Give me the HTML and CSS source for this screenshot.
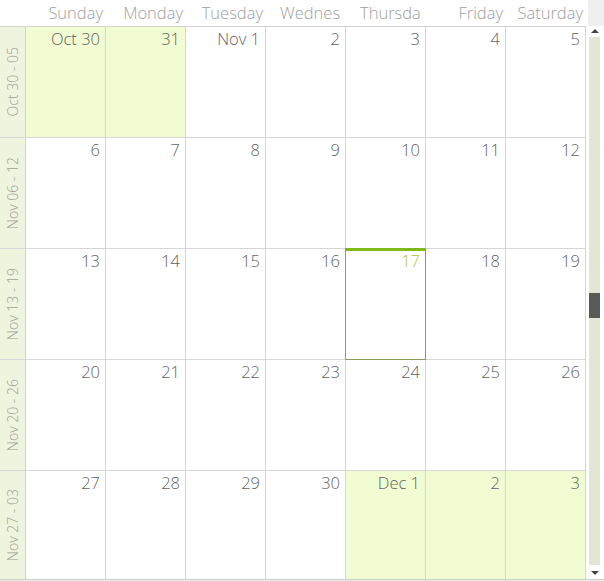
FILE: index.html
```html
<!DOCTYPE html>
<html>
<head>
<meta charset="utf-8">
<link rel="stylesheet" href="styles.css">
</head>
<body>
<div class="cal">
  <div class="main">
    <div class="head">
      <div class="corner"></div>
      <div class="hcell">Sunday</div>
      <div class="hcell">Monday</div>
      <div class="hcell">Tuesday</div>
      <div class="hcell lft">Wednes</div>
      <div class="hcell lft">Thursda</div>
      <div class="hcell">Friday</div>
      <div class="hcell">Saturday</div>
    </div>
    <div class="week">
      <div class="wlabel"><span>Oct 30 - 05</span></div>
      <div class="day other">Oct 30</div>
      <div class="day other">31</div>
      <div class="day">Nov 1</div>
      <div class="day">2</div>
      <div class="day">3</div>
      <div class="day">4</div>
      <div class="day">5</div>
    </div>
    <div class="week">
      <div class="wlabel"><span>Nov 06 - 12</span></div>
      <div class="day">6</div>
      <div class="day">7</div>
      <div class="day">8</div>
      <div class="day">9</div>
      <div class="day">10</div>
      <div class="day">11</div>
      <div class="day">12</div>
    </div>
    <div class="week">
      <div class="wlabel"><span>Nov 13 - 19</span></div>
      <div class="day">13</div>
      <div class="day">14</div>
      <div class="day">15</div>
      <div class="day">16</div>
      <div class="day today">17</div>
      <div class="day">18</div>
      <div class="day">19</div>
    </div>
    <div class="week">
      <div class="wlabel"><span>Nov 20 - 26</span></div>
      <div class="day">20</div>
      <div class="day">21</div>
      <div class="day">22</div>
      <div class="day">23</div>
      <div class="day">24</div>
      <div class="day">25</div>
      <div class="day">26</div>
    </div>
    <div class="week last">
      <div class="wlabel"><span>Nov 27 - 03</span></div>
      <div class="day">27</div>
      <div class="day">28</div>
      <div class="day">29</div>
      <div class="day">30</div>
      <div class="day other">Dec 1</div>
      <div class="day other">2</div>
      <div class="day other">3</div>
    </div>
  </div>
  <div class="scroll">
    <div class="shead"></div>
    <div class="sbtn"><span class="up"></span></div>
    <div class="track"><div class="thumb"></div></div>
    <div class="sbtn"><span class="down"></span></div>
  </div>
</div>
</body>
</html>
```
FILE: styles.css
```css
html, body {
  margin: 0;
  padding: 0;
}
body {
  background: #ebebeb;
  font-family: "Open Sans", "DejaVu Sans", sans-serif;
  font-weight: 300;
  width: 604px;
  height: 581px;
  overflow: hidden;
}
.cal {
  display: flex;
  width: 604px;
  height: 580px;
  background: #ffffff;
  border-bottom: 1px solid #cfcfc9;
  box-sizing: border-box;
}
.main {
  width: 586px;
  display: flex;
  flex-direction: column;
}
.head {
  display: grid;
  grid-template-columns: 26px repeat(7, 80px);
  height: 27px;
  border-bottom: 1px solid #d3d3cd;
  box-sizing: border-box;
}
.hcell {
  color: #a0a0a0;
  font-size: 16.5px;
  line-height: 25px;
  text-align: right;
  padding-right: 3px;
  white-space: nowrap;
  overflow: hidden;
}
.hcell.lft {
  text-align: left;
  padding-left: 14px;
  padding-right: 0;
}
.week {
  display: grid;
  grid-template-columns: 26px repeat(7, 80px);
  height: 111px;
  border-bottom: 1px solid #d6d6d6;
  box-sizing: border-box;
}
.week.last {
  height: 108px;
  border-bottom: none;
}
.wlabel {
  background: #eff4de;
  border-right: 1px solid #d3d3cd;
  display: flex;
  align-items: center;
  justify-content: center;
}
.wlabel span {
  writing-mode: vertical-rl;
  transform: rotate(180deg);
  font-size: 14px;
  color: #a2a29a;
  white-space: nowrap;
}
.day {
  border-right: 1px solid #d6d6d6;
  text-align: right;
  padding: 1px 5px 0 0;
  font-size: 16.5px;
  line-height: 22px;
  color: #636363;
  position: relative;
}
.day.other {
  background: #f1fcd2;
}
.day.today {
  color: #b0c236;
}
.day.today::before {
  content: "";
  position: absolute;
  left: -1px;
  right: -1px;
  top: -1px;
  bottom: -1px;
  border: 1px solid #8d9c60;
  border-top: 3px solid #7fb81a;
  pointer-events: none;
}
.scroll {
  width: 18px;
  display: flex;
  flex-direction: column;
}
.shead {
  height: 26px;
  margin-left: 2px;
  background: #efefef;
}
.sbtn {
  height: 11px;
  position: relative;
}
.sbtn:last-child {
  height: 14px;
}
.up, .down {
  position: absolute;
  left: 5px;
  width: 0;
  height: 0;
  border-left: 4px solid transparent;
  border-right: 4px solid transparent;
}
.up {
  top: 3px;
  border-bottom: 4px solid #444444;
}
.down {
  top: 6px;
  border-top: 4px solid #444444;
}
.track {
  flex: 1;
  margin-left: 3px;
  width: 11px;
  background: #e3e5d5;
  position: relative;
}
.thumb {
  position: absolute;
  left: 0;
  top: 256px;
  width: 11px;
  height: 25px;
  background: #585a56;
}
```
